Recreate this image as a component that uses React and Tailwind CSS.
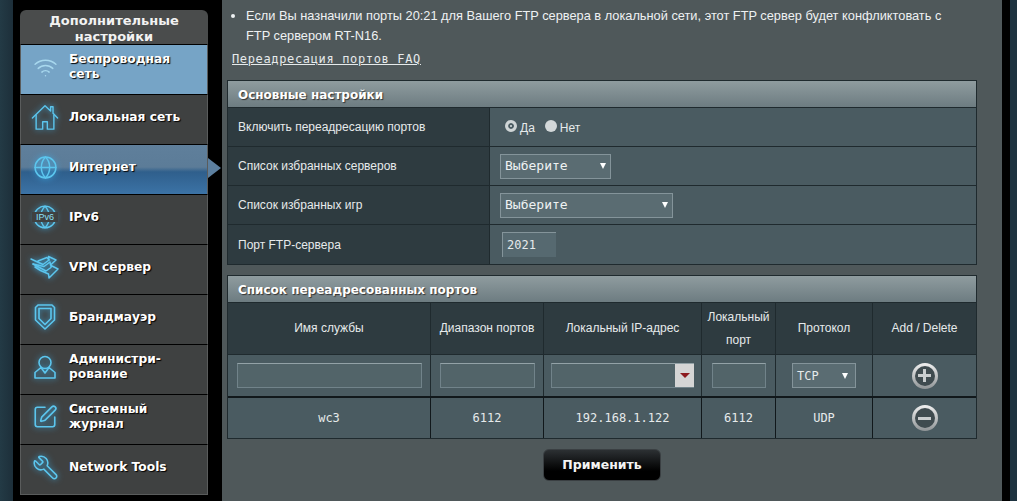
import React from "react";
import { Wifi, Globe, SquarePen, Wrench } from "lucide-react";

const glow = "text-[#5cc6ee] drop-shadow-[0_0_3px_rgba(60,180,240,0.9)]";

const House = () => (
  <svg width="28" height="27" viewBox="0 0 30 28" fill="none" stroke="currentColor" strokeWidth="1.5" strokeLinejoin="round" strokeLinecap="round" className={glow}>
    <path d="M1.5 14.5 15 1.5l6 5.5V2.5h2.6v7L28.5 14.5" />
    <path d="M5.500 11.500v15h7V18.500h5v8h7v-15" />
  </svg>
);
const Vpn = () => (
  <svg width="30" height="24" viewBox="0 0 30 24" fill="none" stroke="currentColor" strokeWidth="1.5" strokeLinejoin="round" strokeLinecap="round" className={glow}>
    <path d="M1 4l12 5.500L19 5l-2-2.500L8 6" />
    <path d="M19 5l-.5-3.500L26 5l-5.500 5-.500-3-6 4.500L3 9" />
    <path d="M3 9l13 7 5-3.500v-2L28 14l-9 9-.5-4-8-3.500L5 12" />
  </svg>
);
const Shield = () => (
  <svg width="22" height="26" viewBox="0 0 22 26" fill="none" stroke="currentColor" strokeWidth="1.6" strokeLinejoin="round" className={glow}>
    <path d="M1.500 3.500 4 1h14l2.500 2.500V16L11 25 1.500 16z" />
    <path d="M5 4.500h12V14.500L11 20.500 5 14.500z" />
  </svg>
);
const User = () => (
  <svg width="22" height="24" viewBox="0 0 22 24" fill="none" stroke="currentColor" strokeWidth="1.6" strokeLinejoin="round" className={glow}>
    <circle cx="11" cy="7.500" r="6" />
    <path d="M7 12.500 1 17.500v5.500h20v-5.500l-6-5L11 18z" />
  </svg>
);

const Ipv6 = () => (
  <div className="relative w-[26px] h-[26px]">
    <div className={glow}><Globe size={26} strokeWidth={1.3} /></div>
    <span className="absolute left-0 top-[8px] w-[26px] text-center text-[9px] leading-[10px] font-normal font-['Liberation_Sans',sans-serif] bg-[#3f4141] text-[#8be0f8]">IPv6</span>
  </div>
);

const items = [
  { label: "Беспроводная сеть", icon: <Wifi size={25} strokeWidth={1.4} className="text-[#a8d8ee]" />, cls: "bg-[#76a4c6]", two: true },
  { label: "Локальная сеть", icon: <House /> },
  { label: "Интернет", icon: <Globe size={25} strokeWidth={1.4} className={glow} />, active: true, cls: "bg-[linear-gradient(#5f7f9b_0%,#5c7c98_45%,#2f5f8c_55%,#3c73a6_100%)]" },
  { label: "IPv6", icon: <Ipv6 /> },
  { label: "VPN сервер", icon: <Vpn /> },
  { label: "Брандмауэр", icon: <Shield /> },
  { label: "Администри-рование", icon: <User />, two: true },
  { label: "Системный журнал", icon: <SquarePen size={26} strokeWidth={1.5} className={glow} />, two: true },
  { label: "Network Tools", icon: <Wrench size={27} strokeWidth={1.4} className={`${glow} -scale-x-100`} /> },
];

const Caret = ({ cls = "border-t-white" }) => (
  <span className={`w-0 h-0 border-l-[3.5px] border-r-[3.5px] border-t-[6px] border-l-transparent border-r-transparent ${cls}`} />
);

const Select = ({ w, label }) => (
  <div className={`${w} h-[25px] flex items-center justify-between pl-[4px] pr-[4px] bg-[#5a6c72] border border-[#84949a] text-[13px] text-[#eef2f3] font-['DejaVu_Sans_Mono',monospace]`}>
    <span>{label}</span>
    <Caret />
  </div>
);

const Row = ({ label, children, last }) => (
  <div className={`flex h-[39px] ${last ? "" : "border-b border-[#1f2a2e]"}`}>
    <div className="w-[262px] shrink-0 border-r border-[#1f2a2e] bg-[#2e3b40] flex items-center pl-[10px] text-[12px] text-[#e6eaeb]">{label}</div>
    <div className="flex-1 flex items-center bg-[#4a5b61]">{children}</div>
  </div>
);

const cols = ["w-[203px]", "w-[113px]", "w-[158px]", "w-[74px]", "w-[97px]", "flex-1"];

const Input = ({ w }) => (
  <div className={`${w} h-[25px] bg-[#526469] border border-[#71838a] border-t-[#93a2a7]`} />
);

const RoundBtn = ({ minus }) => (
  <div className="w-[26px] h-[26px] rounded-full bg-[linear-gradient(#f0f0f0,#8f9496)] flex items-center justify-center">
    <div className="w-[20px] h-[20px] rounded-full bg-[#3f4b4f] flex items-center justify-center relative">
      <span className="w-[13px] h-[3px] bg-[#c9cdce]" />
      {!minus && <span className="absolute w-[3px] h-[13px] bg-[#c9cdce]" />}
    </div>
  </div>
);

export default function App() {
  return (
    <div className="w-[1017px] h-[501px] flex overflow-hidden bg-black font-['Liberation_Sans',sans-serif] text-[#e6eaeb]">
      <div className="w-[13px] shrink-0 bg-[linear-gradient(90deg,#233a45,#1d2f3a)]" />
      <aside className="w-[209px] shrink-0 bg-black pl-[7px] pt-[10px]">
        <div className="w-[188px] font-['DejaVu_Sans',sans-serif] font-bold relative border-b border-[#5a5c5c]">
          <div className="h-[34px] rounded-t-[6px] bg-[#4a4c4c] text-center text-[13px] leading-[16px] pt-[3px] text-[#f2f2f2]">
            Дополнительные<br />настройки
          </div>
          {items.map((it) => (
            <div key={it.label} className={`relative h-[50px] flex items-center pb-[5px] border-t border-black border-x border-x-[#5a5c5c] ${it.cls || "bg-[#3f4141]"}`}>
              <div className="w-[48px] shrink-0 flex justify-center">{it.icon}</div>
              <div className="text-[12.250px] leading-[15px] text-white w-[125px] [text-shadow:1px_1px_1px_#000]">{it.label}</div>
              {it.active && (
                <span className="absolute right-[-14px] top-[13px] w-0 h-0 border-y-[10px] border-y-transparent border-l-[13px] border-l-[#5c7f9f]" />
              )}
            </div>
          ))}
        </div>
      </aside>

      <main className="w-[780px] shrink-0 bg-[#4f585a] px-[5px]">
        <ul className="pt-[6px] pl-[19px] pr-[40px] text-[12.800px] leading-[20px] text-[#eef1f2] list-disc">
          <li>Если Вы назначили порты 20:21 для Вашего FTP сервера в локальной сети, этот FTP сервер будет конфликтовать с FTP сервером RT-N16.</li>
        </ul>
        <div className="mt-[4px] ml-[5px] h-[19px] text-[12px] leading-[18px] underline font-['DejaVu_Sans_Mono',monospace] tracking-[0.65px]">Переадресация портов FAQ</div>

        <section className="mt-[11px] w-[750px] border border-[#1f2a2e]">
          <div className="h-[27px] pt-[2px] border-b border-[#1f2a2e] bg-[linear-gradient(#8f9c9f,#6d7c81)] flex items-center pl-[10px] text-[12px] font-bold font-['DejaVu_Sans',sans-serif] text-white [text-shadow:1px_1px_1px_#333]">Основные настройки</div>
          <Row label="Включить переадресацию портов">
            <div className="flex items-center pl-[15px] text-[12px] pt-[1px]">
              <span className="w-[12px] h-[12px] rounded-full bg-[#dfe3e4] border-[3px] border-[#cfd5d6] relative -top-[2px] [box-shadow:inset_0_0_0_2px_#4a5b61]" />
              <span className="ml-[3px]">Да</span>
              <span className="ml-[10px] w-[12px] h-[12px] rounded-full bg-[#d3d8d9] relative -top-[2px]" />
              <span className="ml-[3px]">Нет</span>
            </div>
          </Row>
          <Row label="Список избранных серверов"><div className="pl-[10px]"><Select w="w-[111px]" label="Выберите" /></div></Row>
          <Row label="Список избранных игр"><div className="pl-[10px]"><Select w="w-[173px]" label="Выберите" /></div></Row>
          <Row label="Порт FTP-сервера" last>
            <div className="pl-[12px]">
              <div className="w-[54px] h-[25px] bg-[#566970] border-t border-l border-[#84949a] flex items-center pl-[4px] text-[12px] font-['DejaVu_Sans_Mono',monospace]">2021</div>
            </div>
          </Row>
        </section>

        <section className="mt-[10px] w-[750px] border border-[#1f2a2e]">
          <div className="h-[27px] pt-[2px] border-b border-[#1f2a2e] bg-[linear-gradient(#8f9c9f,#6d7c81)] flex items-center pl-[10px] text-[12px] font-bold font-['DejaVu_Sans',sans-serif] text-white [text-shadow:1px_1px_1px_#333]">Список переадресованных портов</div>
          <div className="flex h-[51px] bg-[#2e3b40] text-[12px] leading-[23px] text-center">
            {["Имя службы", "Диапазон портов", "Локальный IP-адрес", "Локальный порт", "Протокол", "Add / Delete"].map((t, i) => (
              <div key={t} className={`${cols[i]} ${i < 5 ? "border-r border-[#1f2a2e]" : ""} flex items-center justify-center`}>{t}</div>
            ))}
          </div>
          <div className="flex h-[44px] bg-[#4a5b61] border-y border-[#1f2a2e] border-b-[2px] border-b-[#11181b]">
            <div className={`${cols[0]} border-r border-[#1f2a2e] flex items-center justify-center`}><Input w="w-[185px]" /></div>
            <div className={`${cols[1]} border-r border-[#1f2a2e] flex items-center justify-center`}><Input w="w-[95px]" /></div>
            <div className={`${cols[2]} border-r border-[#1f2a2e] flex items-center justify-center`}>
              <div className="w-[143px] h-[25px] flex bg-[#526469] border border-[#71838a] border-t-[#93a2a7] border-r-0">
                <div className="flex-1" />
                <div className="w-[19px] bg-[#d5d5d5] flex items-center justify-center">
                  <span className="w-0 h-0 border-l-[5px] border-r-[5px] border-t-[5px] border-l-transparent border-r-transparent border-t-[#8c1a1f]" />
                </div>
              </div>
            </div>
            <div className={`${cols[3]} border-r border-[#1f2a2e] flex items-center justify-center`}><Input w="w-[54px]" /></div>
            <div className={`${cols[4]} border-r border-[#1f2a2e] flex items-center justify-center`}>
              <div className="w-[64px] h-[25px] flex items-center justify-between pl-[4px] pr-[7px] bg-[#5a6c72] border border-[#84949a] text-[12px] font-['DejaVu_Sans_Mono',monospace]">TCP<Caret /></div>
            </div>
            <div className={`${cols[5]} flex items-center justify-center`}><RoundBtn /></div>
          </div>
          <div className="flex h-[40px] bg-[#4a5b61] text-[12px] font-['DejaVu_Sans_Mono',monospace]">
            {["wc3", "6112", "192.168.1.122", "6112", "UDP"].map((t, i) => (
              <div key={i} className={`${cols[i]} border-r border-[#11181b] flex items-center justify-center`}>{t}</div>
            ))}
            <div className={`${cols[5]} flex items-center justify-center`}><RoundBtn minus /></div>
          </div>
        </section>

        <div className="mt-[10px] w-[750px] flex justify-center">
          <button className="w-[118px] h-[32px] rounded-[6px] bg-[linear-gradient(#2c3033,#000_70%)] border border-[#3a3f42] text-[12.500px] font-bold font-['DejaVu_Sans',sans-serif] text-[#f4f4f4]">Применить</button>
        </div>
      </main>
      <div className="w-[8px] shrink-0 bg-black" />
      <div className="flex-1 bg-[#1e3340]" />
    </div>
  );
}
